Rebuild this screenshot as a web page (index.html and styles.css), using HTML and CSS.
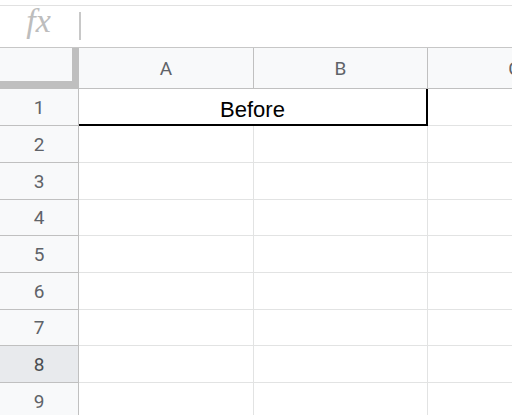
FILE: index.html
```html
<!DOCTYPE html>
<html>
<head>
<meta charset="utf-8">
<link rel="stylesheet" href="styles.css">
</head>
<body>
<div class="top"></div>
<div class="fbar">
  <div class="fx">fx</div>
  <div class="sep"></div>
</div>
<div class="sheet">
  <div class="hrow">
    <div class="corner"></div>
    <div class="ch col-a">A</div>
    <div class="ch col-b">B</div>
    <div class="ch col-c">C</div>
  </div>
  <div class="row first">
    <div class="rh">1</div>
    <div class="merged">Before</div>
    <div class="cell col-c"></div>
  </div>
  <div class="row tall">
    <div class="rh">2</div><div class="cell col-a"></div><div class="cell col-b"></div><div class="cell col-c"></div>
  </div>
  <div class="row tall">
    <div class="rh">3</div><div class="cell col-a"></div><div class="cell col-b"></div><div class="cell col-c"></div>
  </div>
  <div class="row short">
    <div class="rh">4</div><div class="cell col-a"></div><div class="cell col-b"></div><div class="cell col-c"></div>
  </div>
  <div class="row tall">
    <div class="rh">5</div><div class="cell col-a"></div><div class="cell col-b"></div><div class="cell col-c"></div>
  </div>
  <div class="row tall">
    <div class="rh">6</div><div class="cell col-a"></div><div class="cell col-b"></div><div class="cell col-c"></div>
  </div>
  <div class="row short">
    <div class="rh">7</div><div class="cell col-a"></div><div class="cell col-b"></div><div class="cell col-c"></div>
  </div>
  <div class="row tall">
    <div class="rh sel">8</div><div class="cell col-a"></div><div class="cell col-b"></div><div class="cell col-c"></div>
  </div>
  <div class="row tall">
    <div class="rh">9</div><div class="cell col-a"></div><div class="cell col-b"></div><div class="cell col-c"></div>
  </div>
</div>
</body>
</html>
```
FILE: styles.css
```css
html, body {
  margin: 0;
  padding: 0;
}
body {
  width: 512px;
  height: 415px;
  overflow: hidden;
  background: #fff;
  font-family: Roboto, "Liberation Sans", sans-serif;
}
.top {
  height: 5px;
  border-bottom: 1px solid #e1e1e1;
}
.fbar {
  display: flex;
  height: 41px;
}
.fx {
  width: 77px;
  margin-right: 2px;
  flex: none;
  text-align: center;
  font-family: "Liberation Serif", serif;
  font-style: italic;
  font-size: 34px;
  line-height: 30px;
  color: #bdbdbd;
}
.sep {
  width: 2px;
  height: 28px;
  margin-top: 6px;
  background: #c8c8c8;
  flex: none;
}
.sheet {
  width: 512px;
  overflow: hidden;
}
.hrow {
  display: flex;
  height: 42px;
  box-sizing: border-box;
  border-top: 1px solid #c7c7c7;
  width: 700px;
}
.corner {
  width: 79px;
  height: 41px;
  box-sizing: border-box;
  flex: none;
  background: #f8f9fa;
  border-right: 7px solid #bfbfbf;
  border-bottom: 8px solid #bfbfbf;
}
.ch {
  height: 41px;
  box-sizing: border-box;
  flex: none;
  background: #f8f9fa;
  border-right: 1px solid #c0c0c0;
  border-bottom: 1px solid #c0c0c0;
  display: flex;
  align-items: center;
  justify-content: center;
  font-size: 19px;
  color: #5f6368;
}
.col-a { width: 175px; }
.col-b { width: 174px; }
.col-c { width: 174px; }
.row {
  display: flex;
  width: 700px;
}
.first { height: 37px; }
.tall { height: 37px; }
.short { height: 36px; }
.rh {
  width: 79px;
  box-sizing: border-box;
  flex: none;
  background: #f8f9fa;
  border-right: 1px solid #c0c0c0;
  border-bottom: 1px solid #c0c0c0;
  display: flex;
  align-items: center;
  justify-content: center;
  font-size: 19px;
  color: #5f6368;
}
.rh.sel {
  background: #e8eaed;
  color: #4a4d51;
}
.cell {
  box-sizing: border-box;
  flex: none;
  border-right: 1px solid #e2e3e3;
  border-bottom: 1px solid #e2e3e3;
}
.merged {
  width: 349px;
  box-sizing: border-box;
  flex: none;
  border-right: 2px solid #000;
  border-bottom: 2px solid #000;
  display: flex;
  align-items: flex-end;
  justify-content: center;
  padding-bottom: 1px;
  font-family: "Liberation Sans", Arial, sans-serif;
  font-size: 22px;
  color: #000;
}
```
